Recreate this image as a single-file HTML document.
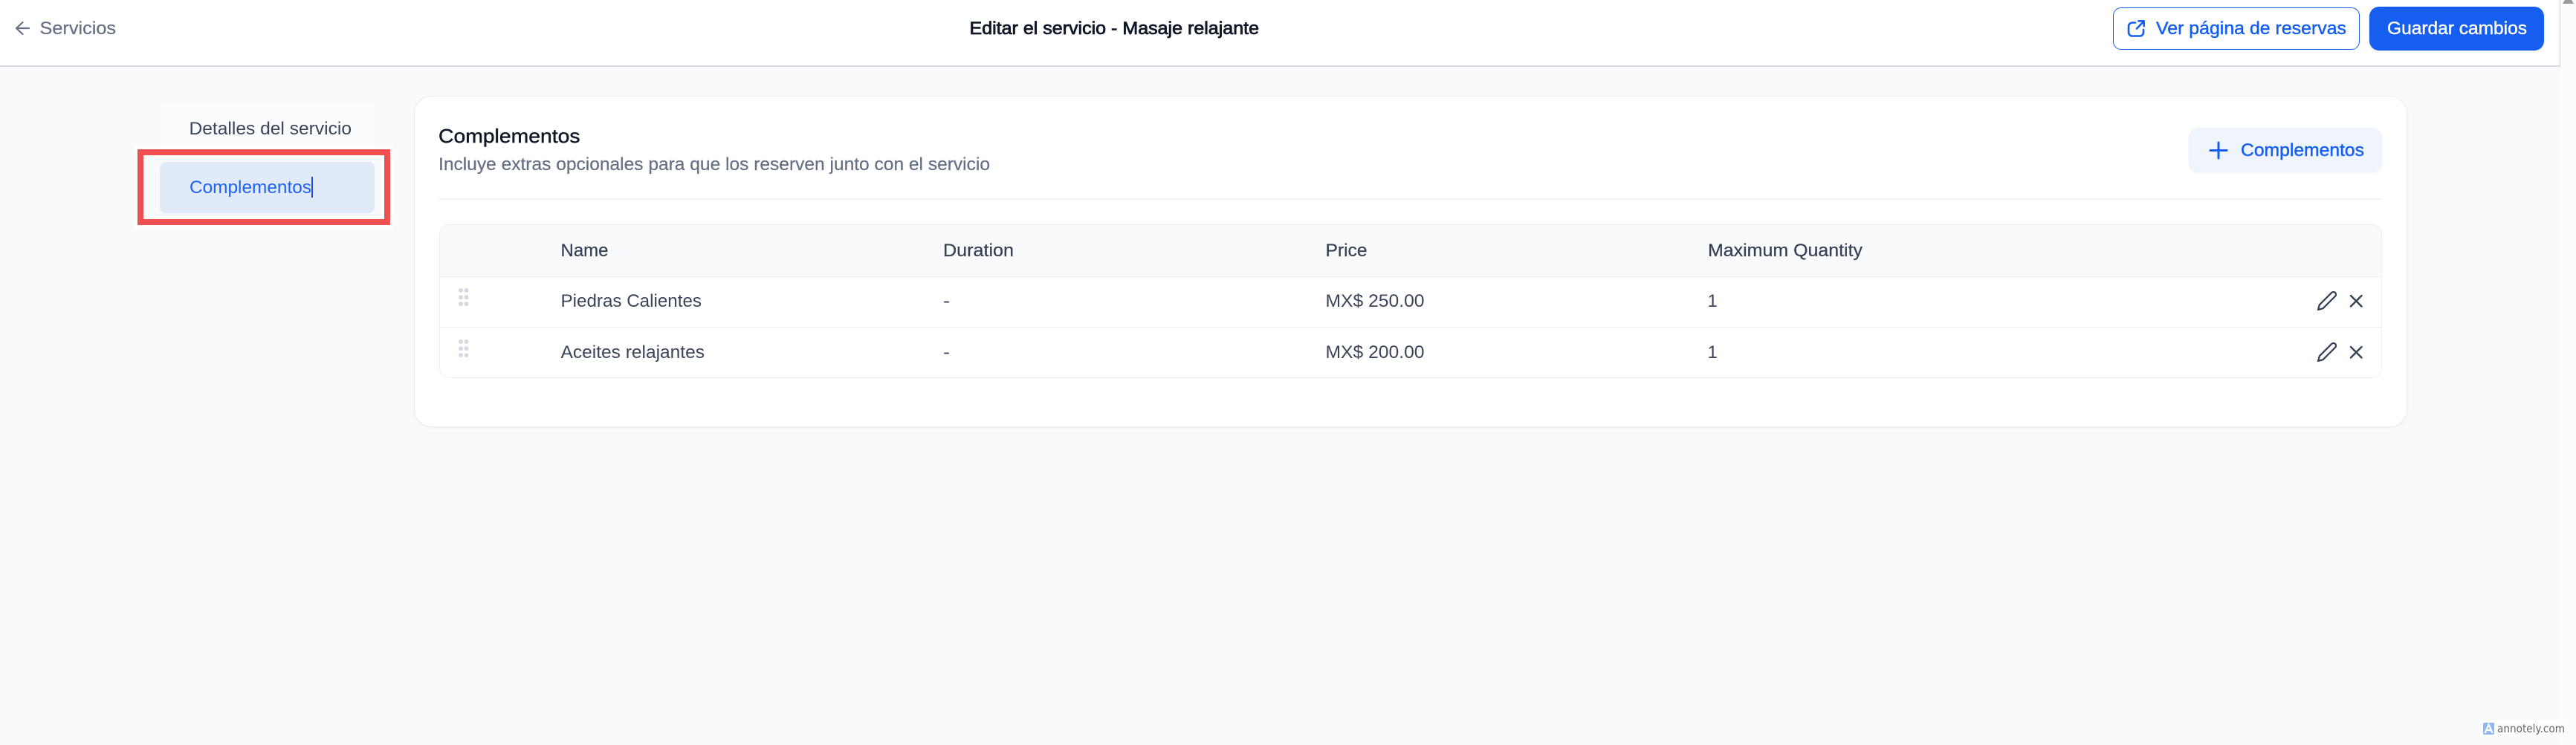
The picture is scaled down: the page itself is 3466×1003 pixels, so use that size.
<!DOCTYPE html>
<html lang="es">
<head>
<meta charset="utf-8">
<title>Editar el servicio</title>
<style>
html,body{margin:0;padding:0;width:3466px;height:1003px;overflow:hidden;background:#f9fafc;font-family:"Liberation Sans",sans-serif}
.b{position:absolute;box-sizing:border-box}
svg{position:absolute;left:0;top:0;display:block}
text{font-family:"Liberation Sans",sans-serif;font-size:24px}
.m{stroke-width:.45px;paint-order:stroke}
.h{stroke-width:.25px;paint-order:stroke}
.s{stroke-width:.8px;paint-order:stroke}
</style>
</head>
<body>
<div class="b" style="left:3444px;top:0;width:22px;height:1003px;background:#fcfcfd"></div>
<div class="b" style="left:0;top:0;width:3445px;height:90px;background:#fff;border-bottom:2px solid #d8dbe3;border-right:1px solid #cdd0d9"></div>
<div class="b" style="left:2843px;top:10px;width:332px;height:57px;border:1.5px solid #1560f0;border-radius:11px;background:#fff"></div>
<div class="b" style="left:3188px;top:9px;width:235px;height:59px;border-radius:13px;background:#155eef;box-shadow:0 1px 3px rgba(16,24,40,.1)"></div>

<div class="b" style="left:215px;top:140px;width:289px;height:57px;background:#fafbfd"></div>
<div class="b" style="left:181px;top:197px;width:348px;height:110px;background:#fff"></div>
<div class="b" style="left:185px;top:201px;width:340px;height:102px;background:#ee5150"></div>
<div class="b" style="left:193px;top:209px;width:324px;height:86px;background:#fff"></div>
<div class="b" style="left:197px;top:213px;width:316px;height:78px;background:#f9fafc"></div>
<div class="b" style="left:215px;top:218px;width:289px;height:69px;border-radius:8px;background:#e1eaf9"></div>
<div class="b" style="left:419px;top:238px;width:1.5px;height:28px;background:#1d4fd8"></div>

<div class="b" style="left:556.5px;top:129px;width:2682px;height:446px;background:#fff;border:1px solid #eceef2;border-radius:24px;box-shadow:0 1px 3px rgba(16,24,40,.05)"></div>
<div class="b" style="left:590.5px;top:267px;width:2613.5px;height:2px;background:#f0f1f4"></div>
<div class="b" style="left:2945px;top:172px;width:259.5px;height:60px;border-radius:13px;background:#f0f4fd;box-shadow:0 1px 3px rgba(16,24,40,.05)"></div>

<div class="b" style="left:590.5px;top:302px;width:2614px;height:207px;border:1px solid #eceef1;border-radius:14px;background:#fff;overflow:hidden">
  <div class="b" style="left:0;top:0;width:100%;height:70px;background:#f9fafb;border-bottom:1px solid #eceef1"></div>
  <div class="b" style="left:0;top:137px;width:100%;height:1px;background:#eceef1"></div>
</div>

<div class="b" style="left:3337px;top:969px;width:118px;height:23px;background:#fdfdfe"></div>
<div class="b" style="left:3341px;top:973px;width:15px;height:16px;border-radius:2px;background:#8db8f5"></div>

<svg width="3466" height="1003" viewBox="0 0 3466 1003" xmlns="http://www.w3.org/2000/svg">
  <!-- scrollbar arrow -->
  <path d="M3448 5 L3451 0 H3460 L3463 5 Z" fill="#999"/>

  <!-- header -->
  <path d="M39 38 H22 M30.5 30 L22 38 L30.5 46" fill="none" stroke="#667085" stroke-width="2.2" stroke-linecap="round" stroke-linejoin="round"/>
  <text x="53.5" y="46" fill="#667085" stroke="#667085" class="h" textLength="102.5" lengthAdjust="spacingAndGlyphs">Servicios</text>
  <text x="1304.5" y="46" fill="#101828" stroke="#101828" class="s" textLength="389.5" lengthAdjust="spacingAndGlyphs">Editar el servicio - Masaje relajante</text>

  <path d="M2873 30.5 H2869 a5 5 0 0 0 -5 5 V43.5 a5 5 0 0 0 5 5 H2879 a5 5 0 0 0 5 -5 V40 M2875 38.5 L2884.5 28.5 M2877.5 28.3 H2884.7 V35" fill="none" stroke="#155eef" stroke-width="2.6" stroke-linecap="round" stroke-linejoin="round"/>
  <text x="2901" y="46" fill="#155eef" stroke="#155eef" class="m" textLength="256" lengthAdjust="spacingAndGlyphs">Ver página de reservas</text>
  <text x="3212" y="46" fill="#fff" stroke="#fff" class="m" textLength="188" lengthAdjust="spacingAndGlyphs">Guardar cambios</text>

  <!-- sidebar -->
  <text x="254.5" y="181" fill="#3a4559" textLength="218.5" lengthAdjust="spacingAndGlyphs">Detalles del servicio</text>
  <text x="255" y="260" fill="#1f62f0" textLength="164" lengthAdjust="spacingAndGlyphs">Complementos</text>

  <!-- card header -->
  <text x="590" y="192" fill="#101828" stroke="#101828" class="m" style="font-size:26px" textLength="190.5" lengthAdjust="spacingAndGlyphs">Complementos</text>
  <text x="590" y="229" fill="#667085" stroke="#667085" class="h" textLength="742" lengthAdjust="spacingAndGlyphs">Incluye extras opcionales para que los reserven junto con el servicio</text>
  <path d="M2985 192 V213 M2974 202.5 H2996" fill="none" stroke="#155eef" stroke-width="3" stroke-linecap="round"/>
  <text x="3015" y="210" fill="#155eef" stroke="#155eef" class="m" textLength="166" lengthAdjust="spacingAndGlyphs">Complementos</text>

  <!-- table header -->
  <g fill="#344054" stroke="#344054">
    <text x="754.5" y="345" textLength="64" lengthAdjust="spacingAndGlyphs" class="h">Name</text>
    <text x="1269" y="345" textLength="95" lengthAdjust="spacingAndGlyphs" class="h">Duration</text>
    <text x="1783.5" y="345" textLength="56" lengthAdjust="spacingAndGlyphs" class="h">Price</text>
    <text x="2298" y="345" textLength="208" lengthAdjust="spacingAndGlyphs" class="h">Maximum Quantity</text>
  </g>

  <!-- rows -->
  <g fill="#3a4559">
    <text x="754.5" y="413" textLength="189.5" lengthAdjust="spacingAndGlyphs">Piedras Calientes</text>
    <text x="1269" y="413" textLength="9" lengthAdjust="spacingAndGlyphs">-</text>
    <text x="1783.5" y="413" textLength="133" lengthAdjust="spacingAndGlyphs">MX$ 250.00</text>
    <text x="2297.5" y="413">1</text>
    <text x="754.5" y="482" textLength="193.5" lengthAdjust="spacingAndGlyphs">Aceites relajantes</text>
    <text x="1269" y="482" textLength="9" lengthAdjust="spacingAndGlyphs">-</text>
    <text x="1783.5" y="482" textLength="133" lengthAdjust="spacingAndGlyphs">MX$ 200.00</text>
    <text x="2297.5" y="482">1</text>
  </g>

  <!-- drag handles -->
  <g fill="#d5d9e1">
    <circle cx="620" cy="391" r="3"/><circle cx="627.5" cy="391" r="3"/>
    <circle cx="620" cy="400.3" r="3"/><circle cx="627.5" cy="400.3" r="3"/>
    <circle cx="620" cy="409.3" r="3"/><circle cx="627.5" cy="409.3" r="3"/>
    <circle cx="620" cy="460" r="3"/><circle cx="627.5" cy="460" r="3"/>
    <circle cx="620" cy="469.3" r="3"/><circle cx="627.5" cy="469.3" r="3"/>
    <circle cx="620" cy="478.3" r="3"/><circle cx="627.5" cy="478.3" r="3"/>
  </g>

  <!-- row actions -->
  <g fill="none" stroke="#344054" stroke-width="1.9" stroke-linecap="round" stroke-linejoin="round">
    <path transform="translate(3116.6 390.6) scale(1.2)" d="M17 3a2.85 2.83 0 1 1 4 4L7.5 20.5 2 22l1.5-5.5Z"/>
    <path transform="translate(3116.6 459.6) scale(1.2)" d="M17 3a2.85 2.83 0 1 1 4 4L7.5 20.5 2 22l1.5-5.5Z"/>
  </g>
  <path d="M3163 398 L3177.5 412.5 M3177.5 398 L3163 412.5 M3163 467 L3177.5 481.5 M3177.5 467 L3163 481.5" fill="none" stroke="#344054" stroke-width="2.4" stroke-linecap="round"/>

  <!-- watermark -->
  <path d="M3343.5 987 L3348.5 975.5 L3353.5 987 M3345.5 983 H3351.5" fill="none" stroke="#fff" stroke-width="2.2"/>
  <text x="3360" y="986" fill="#666" style="font-family:'DejaVu Sans',sans-serif;font-size:15px" textLength="91" lengthAdjust="spacingAndGlyphs">annotely.com</text>
</svg>
</body>
</html>
